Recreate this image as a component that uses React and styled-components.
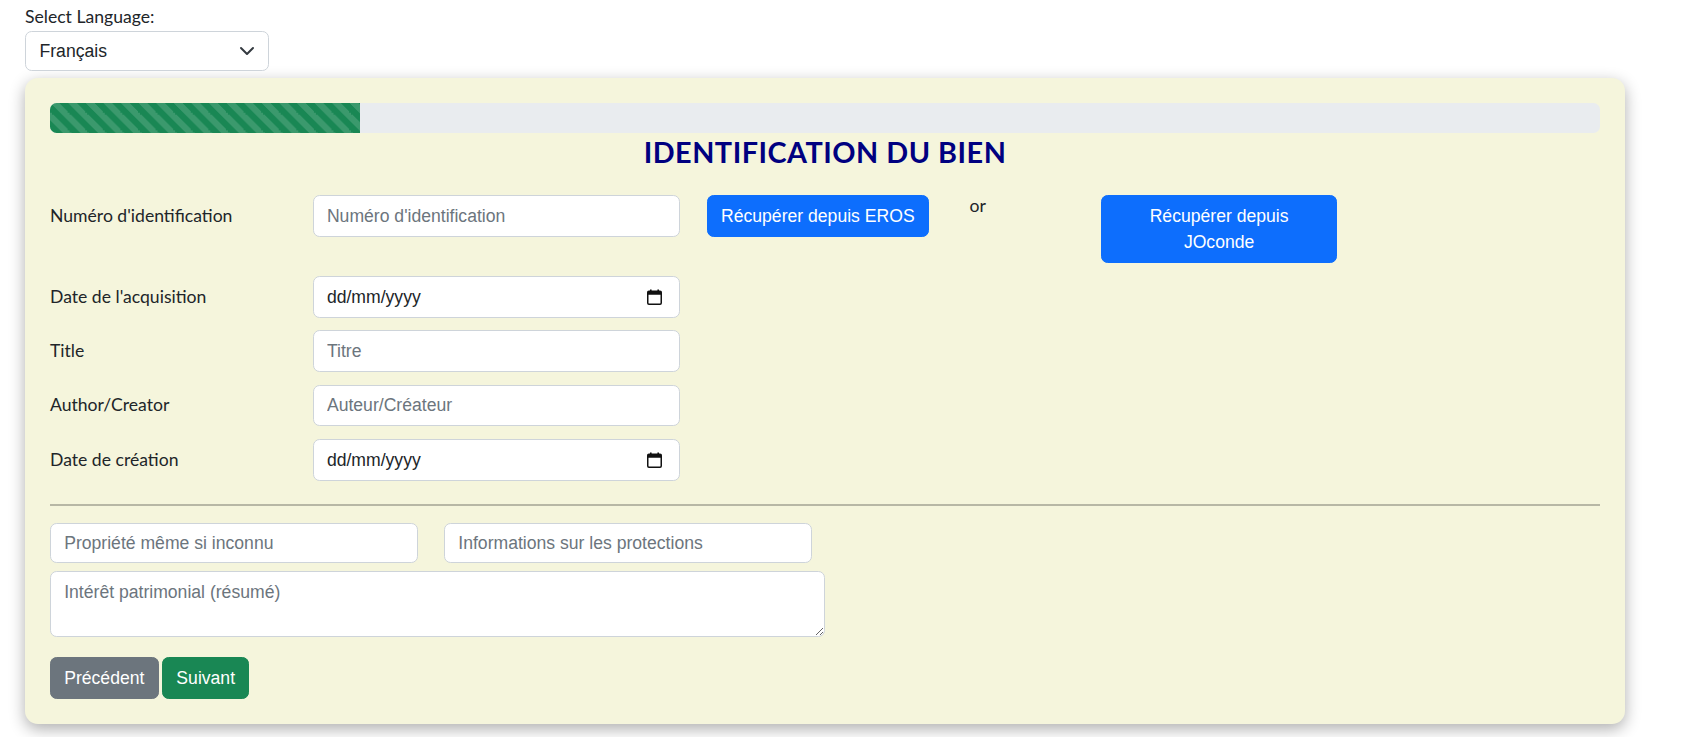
import React from "react";
import styled, { createGlobalStyle } from "styled-components";

const GlobalStyle = createGlobalStyle`
  * { box-sizing: border-box; }
  html, body { margin: 0; padding: 0; background: #ffffff; }
  body {
    font-family: Lato, "Liberation Sans", sans-serif;
    font-size: 17.6px;
    line-height: 1.5;
    color: #212529;
  }
`;

const Page = styled.div`
  padding: 4px 71px 14px 25px;
`;

const LangBlock = styled.div`
  display: flex;
  flex-direction: column;
  align-items: flex-start;
  margin-bottom: 7px;
`;

const LangLabel = styled.label`
  font-family: Lato, sans-serif;
  font-size: 17.6px;
  line-height: 26.4px;
  margin-bottom: 0.6px;
`;

const SelectWrap = styled.div`
  position: relative;
  width: 244px;
`;

const Select = styled.select`
  appearance: none;
  -webkit-appearance: none;
  display: block;
  width: 100%;
  height: 40px;
  padding: 0 40px 0 13.5px;
  font-family: "Liberation Sans", Arial, sans-serif;
  font-size: 17.6px;
  color: #212529;
  background: #ffffff;
  border: 1px solid #ced4da;
  border-radius: 6.6px;
  outline: none;
`;

const Chevron = styled.svg`
  position: absolute;
  right: 14px;
  top: 50%;
  transform: translateY(-50%);
  pointer-events: none;
`;

const Card = styled.section`
  display: flex;
  flex-direction: column;
  background: #f5f5dc;
  border-radius: 13px;
  padding: 25px;
  box-shadow: 0 5px 16px rgba(0, 0, 0, 0.32);
`;

const Progress = styled.div`
  display: flex;
  height: 30px;
  background: #e9ecef;
  border-radius: 6.6px;
  overflow: hidden;
`;

const ProgressBar = styled.div`
  width: ${(p) => p.$value}%;
  background-color: #198754;
  background-image: linear-gradient(
    45deg,
    rgba(255, 255, 255, 0.15) 25%,
    transparent 25%,
    transparent 50%,
    rgba(255, 255, 255, 0.15) 50%,
    rgba(255, 255, 255, 0.15) 75%,
    transparent 75%,
    transparent
  );
  background-size: 17.6px 17.6px;
`;

const Title = styled.h2`
  margin: 2.2px 0 25.5px;
  text-align: center;
  font-family: Lato, sans-serif;
  font-weight: 700;
  font-size: 28.8px;
  letter-spacing: 0.5px;
  line-height: 1.2;
  color: #000080;
`;

const Rows = styled.div`
  display: flex;
  flex-direction: column;
  gap: 12.8px;
`;

const FormRow = styled.div`
  display: grid;
  grid-template-columns: repeat(12, minmax(0, 1fr));
  column-gap: 26.4px;
  align-items: start;
`;

const Label = styled.label`
  grid-column: span 2;
  padding: 7.6px 0;
  font-family: Lato, sans-serif;
  font-size: 17.6px;
  line-height: 26.4px;
  color: #212529;
`;

const Cell = styled.div`
  grid-column: span ${(p) => p.$span};
  display: flex;
  justify-content: flex-start;
`;

const OrText = styled.span`
  grid-column: span 1;
  margin-top: -2px;
  font-family: Lato, sans-serif;
  font-size: 17.6px;
  line-height: 26.4px;
  color: #212529;
`;

const Input = styled.input`
  display: block;
  width: 100%;
  height: ${(p) => p.$h || 41.6}px;
  padding: 0 13.2px;
  font-family: "Liberation Sans", Arial, sans-serif;
  font-size: 17.6px;
  line-height: 26.4px;
  color: #212529;
  background: #ffffff;
  border: 1px solid #ced4da;
  border-radius: 6.6px;
  outline: none;
  &::placeholder {
    color: #6c757d;
    opacity: 1;
  }
`;

const DateField = styled.div`
  display: flex;
  align-items: center;
  justify-content: space-between;
  width: 100%;
  height: 41.6px;
  padding: 0 17px 0 13.2px;
  font-family: "Liberation Sans", Arial, sans-serif;
  font-size: 17.6px;
  color: #212529;
  background: #ffffff;
  border: 1px solid #ced4da;
  border-radius: 6.6px;
`;

const TextArea = styled.textarea`
  display: block;
  width: 50%;
  height: 66px;
  margin-top: 8px;
  padding: 6.6px 13.2px;
  font-family: "Liberation Sans", Arial, sans-serif;
  font-size: 17.6px;
  line-height: 26.4px;
  color: #212529;
  background: #ffffff;
  border: 1px solid #ced4da;
  border-radius: 6.6px;
  outline: none;
  resize: vertical;
  &::placeholder {
    color: #6c757d;
    opacity: 1;
  }
`;

const tones = {
  primary: "#0d6efd",
  secondary: "#6c757d",
  success: "#198754",
};

const Button = styled.button`
  display: inline-block;
  width: ${(p) => (p.$block ? "100%" : "auto")};
  padding: 6.6px 13.2px;
  font-family: "Liberation Sans", Arial, sans-serif;
  font-size: 17.6px;
  line-height: 26.4px;
  color: #ffffff;
  background: ${(p) => tones[p.$tone]};
  border: 1px solid ${(p) => tones[p.$tone]};
  border-radius: 6.6px;
  cursor: pointer;
  text-align: center;
`;

const Divider = styled.hr`
  width: 100%;
  border: 0;
  border-top: 2px solid rgba(0, 0, 0, 0.25);
  margin: 23px 0 17.6px;
`;

const Actions = styled.div`
  display: flex;
  gap: 3.6px;
  margin-top: 19.7px;
`;

const CalendarIcon = () => (
  <svg width="15" height="16" viewBox="0 0 15 16" aria-hidden="true">
    <rect x="3" y="0.5" width="1.6" height="3" fill="#111" />
    <rect x="10.4" y="0.5" width="1.6" height="3" fill="#111" />
    <rect x="0.75" y="2.25" width="13.5" height="13" rx="1.2" fill="none" stroke="#111" strokeWidth="1.5" />
    <rect x="0.75" y="2.25" width="13.5" height="3.5" fill="#111" />
  </svg>
);

const DateInput = () => (
  <DateField>
    <span>dd/mm/yyyy</span>
    <CalendarIcon />
  </DateField>
);

export default function App() {
  return (
    <Page>
      <GlobalStyle />
      <LangBlock>
        <LangLabel htmlFor="lang">Select Language:</LangLabel>
        <SelectWrap>
          <Select id="lang" defaultValue="fr">
            <option value="fr">Français</option>
            <option value="en">English</option>
          </Select>
          <Chevron width="16" height="12" viewBox="0 0 16 12">
            <path d="M2 3l6 6 6-6" fill="none" stroke="#343a40" strokeWidth="2" strokeLinecap="round" strokeLinejoin="round" />
          </Chevron>
        </SelectWrap>
      </LangBlock>

      <Card>
        <Progress>
          <ProgressBar $value={20} />
        </Progress>
        <Title>IDENTIFICATION DU BIEN</Title>

        <Rows>
          <FormRow>
            <Label>Numéro d'identification</Label>
            <Cell $span={3}>
              <Input placeholder="Numéro d'identification" />
            </Cell>
            <Cell $span={2}>
              <Button $tone="primary">Récupérer depuis EROS</Button>
            </Cell>
            <OrText>or</OrText>
            <Cell $span={2}>
              <Button $tone="primary" $block>Récupérer depuis JOconde</Button>
            </Cell>
          </FormRow>
          <FormRow>
            <Label>Date de l'acquisition</Label>
            <Cell $span={3}>
              <DateInput />
            </Cell>
          </FormRow>
          <FormRow>
            <Label>Title</Label>
            <Cell $span={3}>
              <Input placeholder="Titre" />
            </Cell>
          </FormRow>
          <FormRow>
            <Label>Author/Creator</Label>
            <Cell $span={3}>
              <Input placeholder="Auteur/Créateur" />
            </Cell>
          </FormRow>
          <FormRow>
            <Label>Date de création</Label>
            <Cell $span={3}>
              <DateInput />
            </Cell>
          </FormRow>
        </Rows>

        <Divider />

        <FormRow>
          <Cell $span={3}>
            <Input $h={40} placeholder="Propriété même si inconnu" />
          </Cell>
          <Cell $span={3}>
            <Input $h={40} placeholder="Informations sur les protections" />
          </Cell>
        </FormRow>
        <TextArea placeholder="Intérêt patrimonial (résumé)" />

        <Actions>
          <Button $tone="secondary">Précédent</Button>
          <Button $tone="success">Suivant</Button>
        </Actions>
      </Card>
    </Page>
  );
}
